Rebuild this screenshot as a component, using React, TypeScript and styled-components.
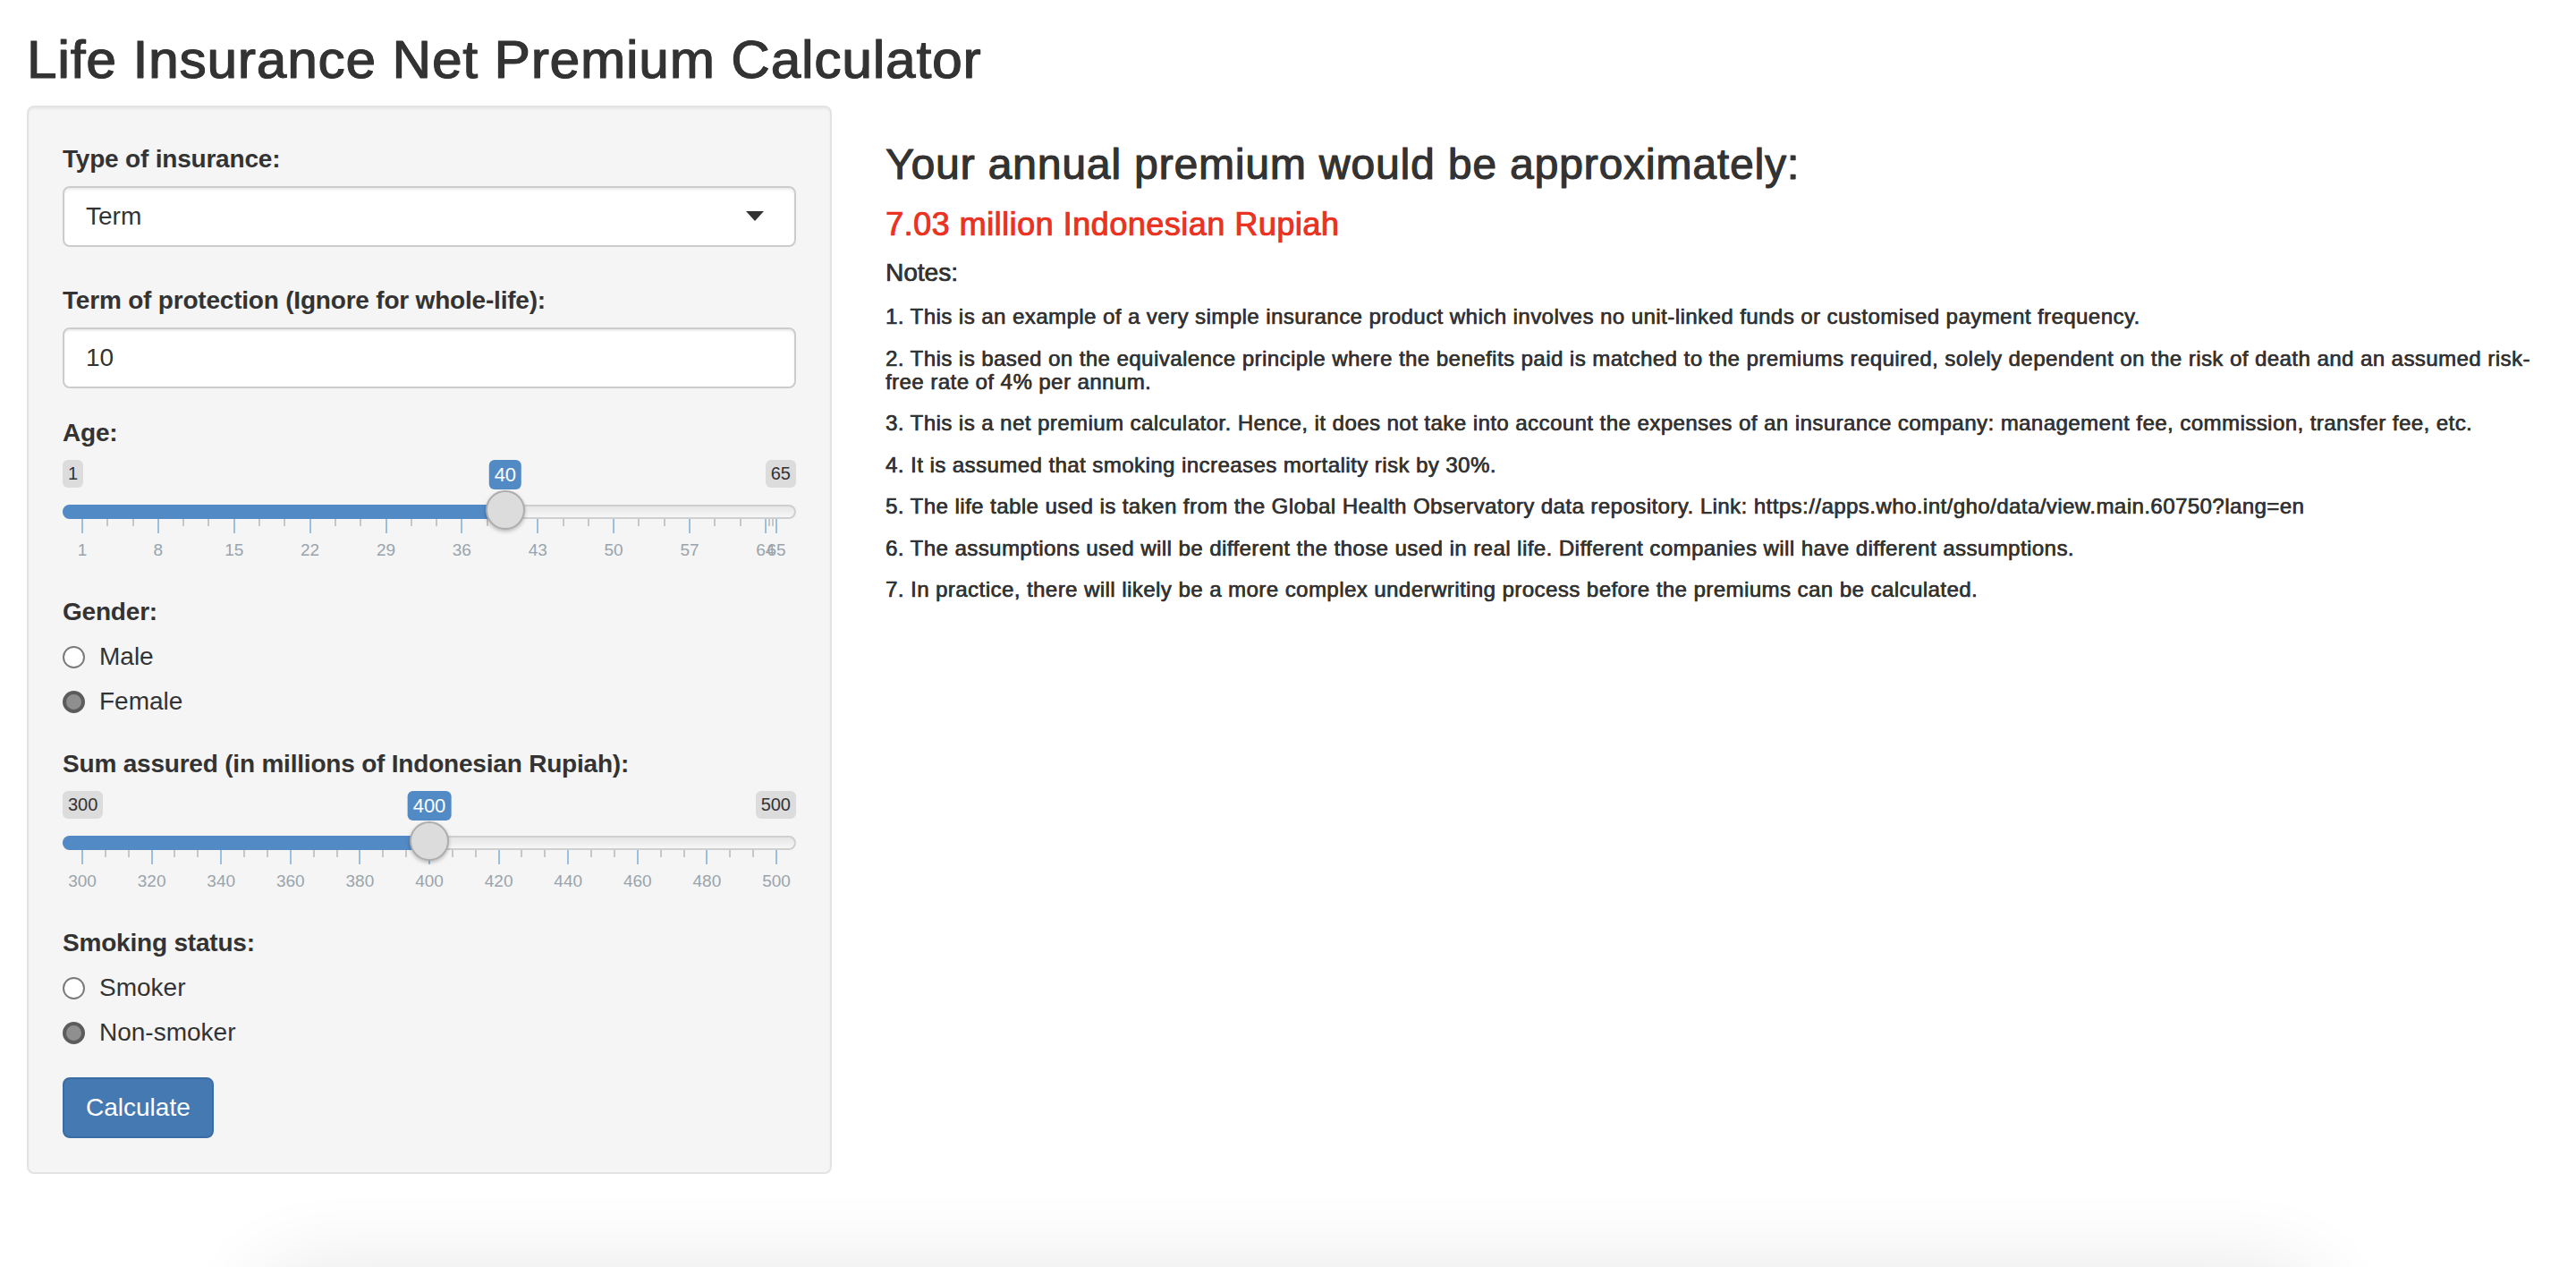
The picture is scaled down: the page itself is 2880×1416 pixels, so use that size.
import React from "react";
import styled, { createGlobalStyle } from "styled-components";

const GlobalStyle = createGlobalStyle`
  html, body { margin: 0; padding: 0; background: #fff; }
  body {
    font-family: "Liberation Sans", Arial, Helvetica, sans-serif;
    font-size: 28px;
    line-height: 1.42857143;
    color: #333;
  }
  * { box-sizing: border-box; }
`;

const Page = styled.div`
  padding: 0 30px;
`;

const Title = styled.h2`
  margin: 34px 0 18px;
  font-size: 60px;
  font-weight: 500;
  line-height: 1.1;
  letter-spacing: 1px;
  -webkit-text-stroke: 1.1px #333;
  text-shadow: 0.8px 0 0 #333;
`;

const Row = styled.div`
  display: grid;
  grid-template-columns: 1fr 2fr;
  align-items: start;
  margin: 0 -30px;
`;

const Col = styled.div`
  padding: 0 30px;
  min-width: 0;
`;

const Well = styled.form`
  background: #f5f5f5;
  border: 2px solid #e3e3e3;
  border-radius: 8px;
  padding: 38px;
  box-shadow: inset 0 2px 2px rgba(0, 0, 0, 0.05);
  margin: 0 0 40px;
`;

const FormGroup = styled.div<{ $mb?: number }>`
  margin-bottom: ${(p) => (p.$mb ?? 30)}px;
`;

const Label = styled.label`
  display: block;
  font-weight: 700;
  line-height: 40px;
  margin-bottom: 10px;
  letter-spacing: -0.2px;
`;

const SelectBox = styled.div`
  position: relative;
  height: 68px;
  padding: 12px 24px;
  line-height: 40px;
  background: #fff;
  border: 2px solid #ccc;
  border-radius: 8px;
  box-shadow: inset 0 2px 2px rgba(0, 0, 0, 0.075);
  &::after {
    content: "";
    position: absolute;
    right: 34px;
    top: 50%;
    margin-top: -6px;
    border-style: solid;
    border-width: 11px 10px 0;
    border-color: #333 transparent transparent transparent;
  }
`;

const TextInput = styled.input`
  display: block;
  width: 100%;
  height: 68px;
  padding: 12px 24px;
  font-family: inherit;
  font-size: 28px;
  line-height: 40px;
  color: #333;
  background: #fff;
  border: 2px solid #ccc;
  border-radius: 8px;
  box-shadow: inset 0 2px 2px rgba(0, 0, 0, 0.075);
  outline: none;
`;

/* ---------- slider (ion.rangeSlider, shiny skin) ---------- */

const Irs = styled.div`
  position: relative;
  height: 120px;
`;

const EdgeLabel = styled.span<{ $side: "left" | "right" }>`
  position: absolute;
  top: 0;
  ${(p) => (p.$side === "left" ? "left: 0;" : "right: 0;")}
  padding: 2px 6px;
  font-size: 20px;
  line-height: 26.7px;
  color: #333;
  background: rgba(0, 0, 0, 0.1);
  border-radius: 6px;
`;

const SingleLabel = styled.span`
  position: absolute;
  top: 0;
  transform: translateX(-50%);
  padding: 2px 6px;
  font-size: 22px;
  line-height: 29.3px;
  color: #fff;
  background: #528ac6;
  border-radius: 6px;
  white-space: nowrap;
`;

const Line = styled.div`
  position: absolute;
  top: 50px;
  left: 0;
  right: 0;
  height: 16px;
  border: 2px solid #cfcfcf;
  border-radius: 16px;
  background: linear-gradient(to bottom, #dddddd -50%, #ffffff 150%);
`;

const Bar = styled.div`
  position: absolute;
  top: 50px;
  left: 0;
  height: 16px;
  background: #528ac6;
  border-radius: 16px 0 0 16px;
`;

const Handle = styled.div`
  position: absolute;
  top: 34px;
  width: 44px;
  height: 44px;
  transform: translateX(-50%);
  background: #dcdcdc;
  border: 2px solid #adadad;
  border-radius: 50%;
  box-shadow: 0 2px 4px rgba(0, 0, 0, 0.25);
`;

const Tick = styled.span<{ $major?: boolean }>`
  position: absolute;
  top: 66px;
  width: 2px;
  margin-left: -1px;
  height: ${(p) => (p.$major ? 16 : 8)}px;
  background: ${(p) => (p.$major ? "#428bca" : "#999")};
  opacity: 0.5;
`;

const TickText = styled.span`
  position: absolute;
  top: 91px;
  transform: translateX(-50%);
  font-size: 19px;
  line-height: 19px;
  color: #99a4ac;
  white-space: nowrap;
`;

type SliderProps = { min: number; max: number; value: number; ticks: number[] };

function Slider({ min, max, value, ticks }: SliderProps) {
  const pos = (v: number) => `calc(22px + ${(v - min) / (max - min)} * (100% - 44px))`;
  const minors: number[] = [];
  for (let i = 0; i < ticks.length - 1; i++) {
    const a = ticks[i];
    const b = ticks[i + 1];
    minors.push(a + (b - a) / 3, a + (2 * (b - a)) / 3);
  }
  return (
    <Irs>
      <EdgeLabel $side="left">{min}</EdgeLabel>
      <EdgeLabel $side="right">{max}</EdgeLabel>
      {ticks.map((t) => (
        <Tick key={"M" + t} $major style={{ left: pos(t) }} />
      ))}
      {minors.map((t, i) => (
        <Tick key={"m" + i} style={{ left: pos(t) }} />
      ))}
      {ticks.map((t) => (
        <TickText key={"T" + t} style={{ left: pos(t) }}>
          {t}
        </TickText>
      ))}
      <Line />
      <Bar style={{ width: pos(value) }} />
      <SingleLabel style={{ left: pos(value) }}>{value}</SingleLabel>
      <Handle style={{ left: pos(value) }} />
    </Irs>
  );
}

/* ---------- radios ---------- */

const RadioList = styled.div`
  display: flex;
  flex-direction: column;
  gap: 10px;
`;

const RadioRow = styled.div`
  display: flex;
  align-items: center;
  gap: 16px;
  height: 40px;
`;

const RadioDot = styled.span<{ $checked?: boolean }>`
  flex: none;
  width: 25px;
  height: 25px;
  border-radius: 50%;
  background: ${(p) => (p.$checked ? "#8f8f8f" : "#fff")};
  border: ${(p) => (p.$checked ? "4px solid #5c5c5c" : "2px solid #7a7a7a")};
`;

const Button = styled.button`
  display: inline-block;
  height: 68px;
  padding: 12px 24px;
  font-family: inherit;
  font-size: 28px;
  line-height: 40px;
  color: #fff;
  background: #4479b2;
  border: 2px solid #3a6da3;
  border-radius: 8px;
`;

/* ---------- main panel ---------- */

const Heading = styled.h3`
  margin: 40px 0 20px;
  font-size: 48px;
  font-weight: 500;
  line-height: 1.1;
  letter-spacing: 0.85px;
  -webkit-text-stroke: 0.9px #333;
  text-shadow: 0.6px 0 0 #333;
`;

const Premium = styled.h4`
  margin: 20px 0;
  font-size: 36px;
  font-weight: 500;
  line-height: 1.1;
  letter-spacing: 0.5px;
  color: #ea3323;
  -webkit-text-stroke: 0.7px #ea3323;
  text-shadow: 0.4px 0 0 #ea3323;
`;

const NotesTitle = styled.h5`
  margin: 20px 0;
  font-size: 28px;
  font-weight: 500;
  line-height: 1.1;
  -webkit-text-stroke: 0.55px #333;
  text-shadow: 0.3px 0 0 #333;
`;

const Note = styled.h6`
  margin: 20px 0;
  font-size: 24px;
  font-weight: 500;
  line-height: 1.1;
  letter-spacing: 0.45px;
  -webkit-text-stroke: 0.5px #333;
  text-shadow: 0.25px 0 0 #333;
`;

const FloorShadow = styled.div`
  position: fixed;
  left: 290px;
  right: 290px;
  top: 1422px;
  height: 200px;
  background: #fff;
  border-radius: 60px;
  box-shadow: 0 0 90px 10px rgba(0, 0, 0, 0.09);
  pointer-events: none;
`;

const notes = [
  "1. This is an example of a very simple insurance product which involves no unit-linked funds or customised payment frequency.",
  "2. This is based on the equivalence principle where the benefits paid is matched to the premiums required, solely dependent on the risk of death and an assumed risk-free rate of 4% per annum.",
  "3. This is a net premium calculator. Hence, it does not take into account the expenses of an insurance company: management fee, commission, transfer fee, etc.",
  "4. It is assumed that smoking increases mortality risk by 30%.",
  "5. The life table used is taken from the Global Health Observatory data repository. Link: https://apps.who.int/gho/data/view.main.60750?lang=en",
  "6. The assumptions used will be different the those used in real life. Different companies will have different assumptions.",
  "7. In practice, there will likely be a more complex underwriting process before the premiums can be calculated.",
];

export default function App() {
  return (
    <>
      <GlobalStyle />
      <Page>
        <Title>Life Insurance Net Premium Calculator</Title>
        <Row>
          <Col>
            <Well onSubmit={(e) => e.preventDefault()}>
              <FormGroup $mb={40}>
                <Label>Type of insurance:</Label>
                <SelectBox>Term</SelectBox>
              </FormGroup>
              <FormGroup>
                <Label>Term of protection (Ignore for whole-life):</Label>
                <TextInput type="text" defaultValue="10" readOnly />
              </FormGroup>
              <FormGroup>
                <Label>Age:</Label>
                <Slider min={1} max={65} value={40} ticks={[1, 8, 15, 22, 29, 36, 43, 50, 57, 64, 65]} />
              </FormGroup>
              <FormGroup>
                <Label>Gender:</Label>
                <RadioList>
                  <RadioRow>
                    <RadioDot />
                    <span>Male</span>
                  </RadioRow>
                  <RadioRow>
                    <RadioDot $checked />
                    <span>Female</span>
                  </RadioRow>
                </RadioList>
              </FormGroup>
              <FormGroup>
                <Label>Sum assured (in millions of Indonesian Rupiah):</Label>
                <Slider
                  min={300}
                  max={500}
                  value={400}
                  ticks={[300, 320, 340, 360, 380, 400, 420, 440, 460, 480, 500]}
                />
              </FormGroup>
              <FormGroup>
                <Label>Smoking status:</Label>
                <RadioList>
                  <RadioRow>
                    <RadioDot />
                    <span>Smoker</span>
                  </RadioRow>
                  <RadioRow>
                    <RadioDot $checked />
                    <span>Non-smoker</span>
                  </RadioRow>
                </RadioList>
              </FormGroup>
              <Button type="button">Calculate</Button>
            </Well>
          </Col>
          <Col>
            <Heading>Your annual premium would be approximately:</Heading>
            <Premium>7.03 million Indonesian Rupiah</Premium>
            <NotesTitle>Notes:</NotesTitle>
            {notes.map((n) => (
              <Note key={n}>{n}</Note>
            ))}
          </Col>
        </Row>
      </Page>
      <FloorShadow />
    </>
  );
}
